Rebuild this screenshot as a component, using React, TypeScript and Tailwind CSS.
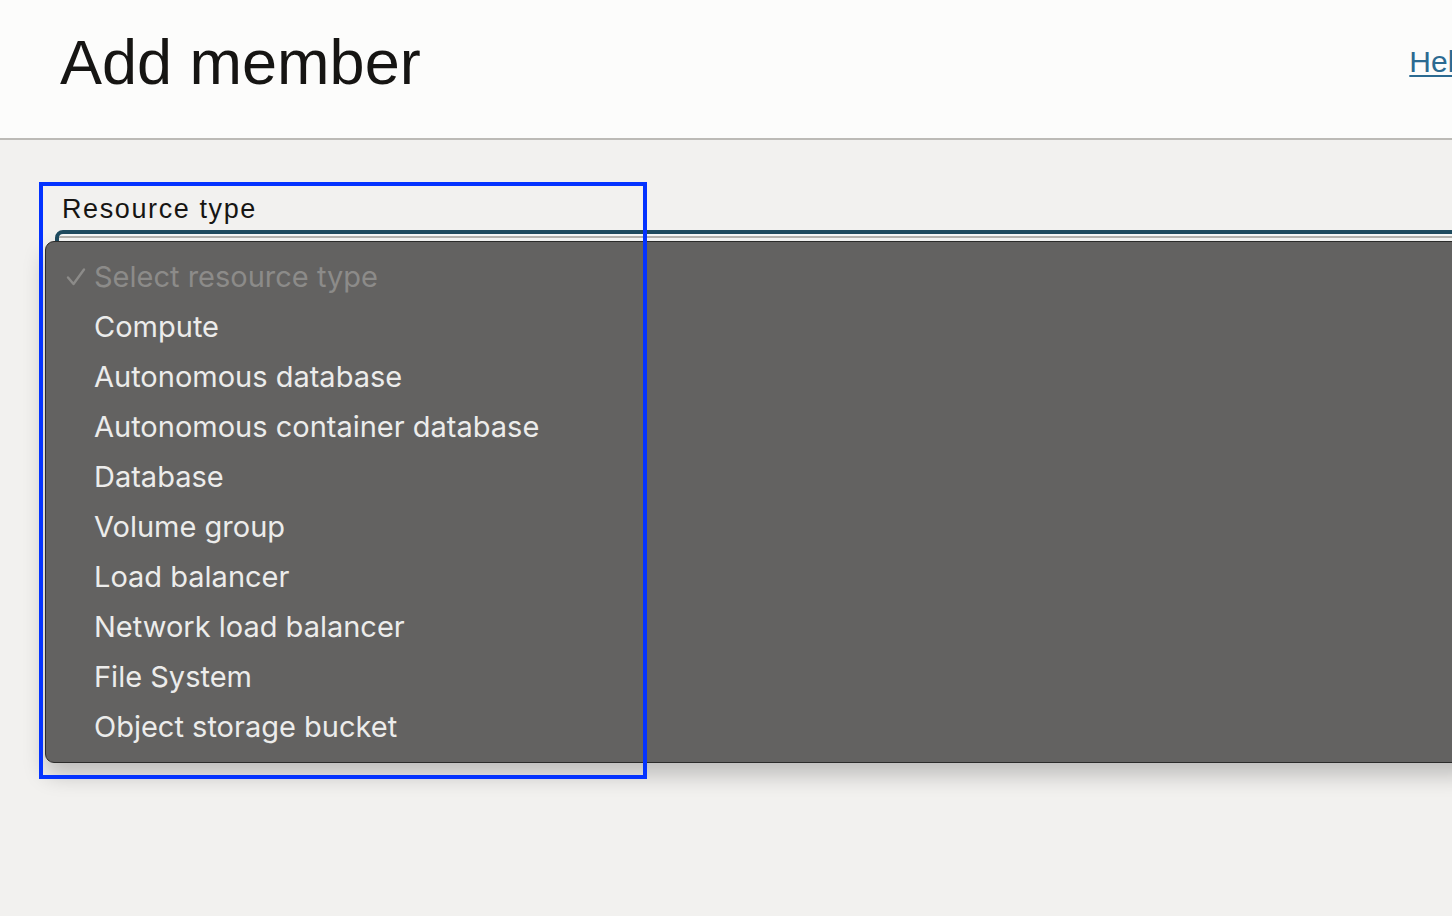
import React from "react";

const items = [
  "Compute",
  "Autonomous database",
  "Autonomous container database",
  "Database",
  "Volume group",
  "Load balancer",
  "Network load balancer",
  "File System",
  "Object storage bucket",
];

export default function App() {
  return (
    <div className="relative w-[1452px] h-[916px] overflow-hidden bg-[#f2f1ef] font-['Liberation_Sans',Arial,sans-serif]">
      <header className="flex h-[140px] items-start border-b-2 border-[#bcbab6] bg-[#fcfcfb]">
        <h1 className="ml-[60px] mt-[31px] text-[63px] leading-[63px] text-[#161513]">Add member</h1>
        <a className="ml-auto mr-[-19px] mt-[47px] text-[30px] leading-[30px] text-[#2b6a91] underline decoration-2 underline-offset-[3px]">
          Help
        </a>
      </header>

      <main className="pl-[62px] pt-[56px]">
        <label className="block text-[27px] leading-[26px] tracking-[1.6px] text-[#161513]">Resource type</label>
        <div className="ml-[-7px] mt-[8px] h-[48px] w-[1420px] rounded-[8px] border-4 border-[#1f4b5f] bg-[#f8f8f7]">
          <div className="mt-[2px] h-[2px] w-full bg-[#b5b3af]" />
        </div>
      </main>

      <div className="absolute left-[45px] top-[241px] h-[522px] w-[1430px] rounded-[9px] border border-[#2b2b2a] bg-[#636261] pt-[10px] shadow-[0_12px_22px_rgba(0,0,0,0.22)] font-['Inter','Noto_Sans',sans-serif]">
        <div className="flex h-[50px] items-center text-[29px] text-[#8c8b89]">
          <span className="flex w-[48px] items-center pl-[20px]">
            <svg width="20" height="20" viewBox="0 0 20 20" fill="none" stroke="#8c8b89" strokeWidth="2.4" strokeLinecap="round" strokeLinejoin="round">
              <polyline points="2,10.5 7.5,17 18,2.5" />
            </svg>
          </span>
          <span>Select resource type</span>
        </div>
        {items.map((t) => (
          <div key={t} className="flex h-[50px] items-center pl-[48px] text-[29px] text-[#ececeb]">
            {t}
          </div>
        ))}
      </div>

      <div className="pointer-events-none absolute left-[39px] top-[182px] h-[597px] w-[608px] border-4 border-[#0433ff]" />
    </div>
  );
}
